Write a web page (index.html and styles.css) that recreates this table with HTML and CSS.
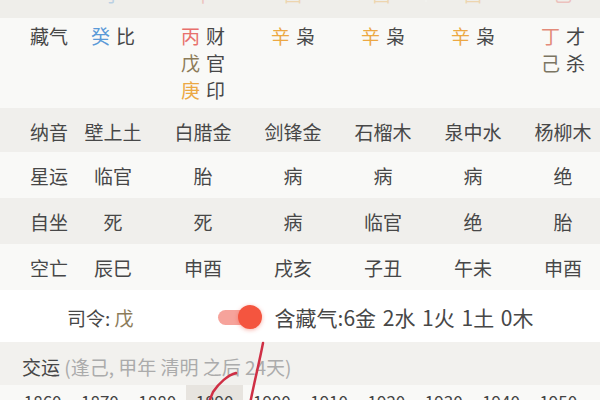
FILE: index.html
```html
<!DOCTYPE html>
<html lang="zh-CN">
<head>
    <meta charset="UTF-8">
    <meta name="viewport" content="width=device-width, initial-scale=1.0">
    <title>排盘</title>
    <link rel="stylesheet" href="styles.css">
</head>
<body>
    <div class="chart">
        <div class="row strip">
            <div class="cell label"></div>
            <div class="cell"><span class="shui">子</span></div>
            <div class="cell"><span class="huo">午</span></div>
            <div class="cell"><span class="jin">酉</span></div>
            <div class="cell split"><span class="jin">酉</span></div>
            <div class="cell"><span class="jin">酉</span></div>
            <div class="cell"><span class="huo">巳</span></div>
        </div>

        <div class="row hidden-stems">
            <div class="cell label">藏气</div>
            <div class="cell">
                <p><span class="shui">癸</span>比</p>
            </div>
            <div class="cell">
                <p><span class="huo">丙</span>财</p>
                <p><span class="tu">戊</span>官</p>
                <p><span class="jin">庚</span>印</p>
            </div>
            <div class="cell">
                <p><span class="jin">辛</span>枭</p>
            </div>
            <div class="cell">
                <p><span class="jin">辛</span>枭</p>
            </div>
            <div class="cell">
                <p><span class="jin">辛</span>枭</p>
            </div>
            <div class="cell">
                <p><span class="ding">丁</span>才</p>
                <p><span class="ji">己</span>杀</p>
            </div>
        </div>

        <div class="row shade nayin">
            <div class="cell label">纳音</div>
            <div class="cell">壁上土</div>
            <div class="cell">白腊金</div>
            <div class="cell">剑锋金</div>
            <div class="cell">石榴木</div>
            <div class="cell">泉中水</div>
            <div class="cell">杨柳木</div>
        </div>

        <div class="row">
            <div class="cell label">星运</div>
            <div class="cell">临官</div>
            <div class="cell">胎</div>
            <div class="cell">病</div>
            <div class="cell">病</div>
            <div class="cell">病</div>
            <div class="cell">绝</div>
        </div>

        <div class="row shade">
            <div class="cell label">自坐</div>
            <div class="cell">死</div>
            <div class="cell">死</div>
            <div class="cell">病</div>
            <div class="cell">临官</div>
            <div class="cell">绝</div>
            <div class="cell">胎</div>
        </div>

        <div class="row">
            <div class="cell label">空亡</div>
            <div class="cell">辰巳</div>
            <div class="cell">申酉</div>
            <div class="cell">戌亥</div>
            <div class="cell">子丑</div>
            <div class="cell">午未</div>
            <div class="cell">申酉</div>
        </div>
    </div>

    <div class="siling">
        <div class="siling-text">司令: <span class="tu">戊</span></div>
        <div class="toggle">
            <span class="toggle-track"></span>
            <span class="toggle-knob"></span>
        </div>
        <div class="qi-count">含藏气:6金 2水 1火 1土 0木</div>
    </div>

    <div class="jiaoyun">
        <span class="jiaoyun-title">交运</span>
        <span class="jiaoyun-note">(逢己, 甲年 清明 之后 24天)</span>
    </div>

    <div class="years">
        <div class="year">1860</div>
        <div class="year">1870</div>
        <div class="year">1880</div>
        <div class="year current">1890</div>
        <div class="year">1900</div>
        <div class="year">1910</div>
        <div class="year">1920</div>
        <div class="year">1930</div>
        <div class="year">1940</div>
        <div class="year">1950</div>
    </div>

    <!-- hand drawn marks over the screenshot -->
    <svg class="marks" width="600" height="400" viewBox="0 0 600 400">
        <path d="M263 343 C259 364 254 383 250 404" />
        <path d="M236 373 C228 375 219 383 213 392 L208 404" />
    </svg>
</body>
</html>
```

FILE: styles.css
```css
* {
    margin: 0;
    padding: 0;
    box-sizing: border-box;
}

html, body {
    width: 600px;
    height: 400px;
    overflow: hidden;
}

body {
    position: relative;
    background-color: #f9f9f7;
    color: #474747;
    font-family: "Noto Sans CJK SC", "Noto Sans", sans-serif;
    font-size: 19px;
}

.chart {
    width: 608px;
}

.row {
    display: grid;
    grid-template-columns: 68px repeat(6, 90px);
    height: 46px;
    align-items: center;
    line-height: 27px;
}

.cell {
    text-align: center;
    white-space: nowrap;
}

.cell.label {
    text-align: left;
    padding-left: 30px;
}

.shade {
    background-color: #f0efec;
}

/* last row of the table above, scrolled almost out of view */
.strip {
    height: 18px;
    overflow: hidden;
    align-items: start;
    background-color: #efeeea;
}

.strip .cell {
    height: 18px;
    line-height: 19px;
    margin-top: -16px;
    opacity: 0.35;
}

.strip .split {
    border-right: 2px solid #f7f7f5;
    margin-right: 1px;
}

.hidden-stems {
    height: 90px;
    align-items: start;
    padding-top: 4px;
}

.hidden-stems p span {
    margin-right: 6px;
}

.nayin {
    height: 44px;
}

.nayin .cell {
    padding-top: 2px;
}

.shui { color: #5a9ad8; }
.huo  { color: #e8706c; }
.tu   { color: #8c7b58; }
.jin  { color: #eca843; }
.ding { color: #e38b7a; }
.ji   { color: #7b7562; }

.siling {
    display: flex;
    align-items: center;
    height: 52px;
    padding-left: 67px;
    padding-top: 2px;
    background-color: #ffffff;
}

.toggle {
    position: relative;
    width: 44px;
    height: 24px;
    margin-left: 84px;
    margin-right: 13px;
}

.toggle-track {
    position: absolute;
    left: 0;
    top: 5px;
    width: 34px;
    height: 15px;
    border-radius: 8px;
    background-color: #f6a39b;
}

.toggle-knob {
    position: absolute;
    left: 20px;
    top: 0;
    width: 24px;
    height: 24px;
    border-radius: 50%;
    background-color: #f4553f;
    box-shadow: 0 1px 4px rgba(240, 80, 60, 0.45);
}

.qi-count {
    font-size: 21px;
    word-spacing: 2px;
}

.jiaoyun {
    height: 43px;
    padding-left: 22px;
    padding-top: 12px;
    line-height: 26px;
    background-color: #f2f1ee;
}

.jiaoyun-note {
    color: #ababab;
    font-size: 19px;
}

.years {
    display: flex;
    padding-left: 14px;
    background-color: #f9f9f7;
}

.year {
    width: 57.3px;
    height: 30px;
    padding-top: 7px;
    text-align: center;
    font-size: 17px;
    line-height: 20px;
    color: #444;
}

.year.current {
    background-color: #e7e4df;
}

.marks {
    position: absolute;
    top: 0;
    left: 0;
    pointer-events: none;
}

.marks path {
    fill: none;
    stroke: #cf2f45;
    stroke-width: 2.5;
    stroke-linecap: round;
}
```
